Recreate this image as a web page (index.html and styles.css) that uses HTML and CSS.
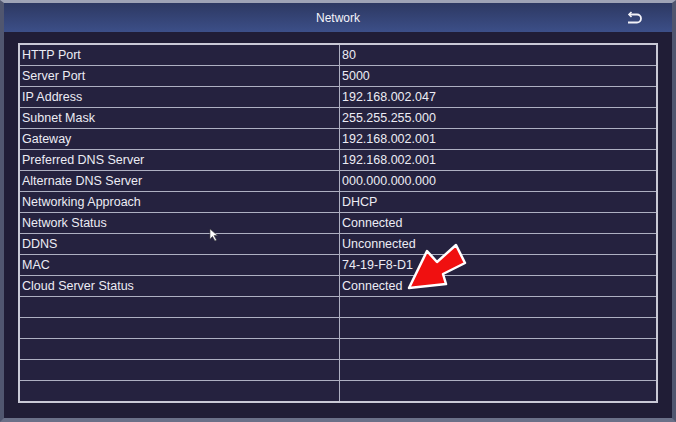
FILE: index.html
```html
<!DOCTYPE html>
<html lang="en">
<head>
    <meta charset="UTF-8">
    <title>Network</title>
    <link rel="stylesheet" href="styles.css">
</head>
<body>
    <div class="window">
        <div class="titlebar">
            <span class="title">Network</span>
            <svg class="back" width="18" height="14" viewBox="0 0 18 14">
                <path d="M3 3.5 H11 A4 4 0 0 1 11 11.5 H2" fill="none" stroke="#f2f2f8" stroke-width="1.8"/>
                <path d="M5.5 1 L3 3.5 L5.5 6" fill="none" stroke="#f2f2f8" stroke-width="1.6"/>
            </svg>
        </div>
        <div class="content">
            <table class="info">
                <tr><td>HTTP Port</td><td>80</td></tr>
                <tr><td>Server Port</td><td>5000</td></tr>
                <tr><td>IP Address</td><td>192.168.002.047</td></tr>
                <tr><td>Subnet Mask</td><td>255.255.255.000</td></tr>
                <tr><td>Gateway</td><td>192.168.002.001</td></tr>
                <tr><td>Preferred DNS Server</td><td>192.168.002.001</td></tr>
                <tr><td>Alternate DNS Server</td><td>000.000.000.000</td></tr>
                <tr><td>Networking Approach</td><td>DHCP</td></tr>
                <tr><td>Network Status</td><td>Connected</td></tr>
                <tr><td>DDNS</td><td>Unconnected</td></tr>
                <tr><td>MAC</td><td>74-19-F8-D1</td></tr>
                <tr><td>Cloud Server Status</td><td>Connected</td></tr>
                <tr><td></td><td></td></tr>
                <tr><td></td><td></td></tr>
                <tr><td></td><td></td></tr>
                <tr><td></td><td></td></tr>
                <tr><td></td><td></td></tr>
            </table>
        </div>
        <!-- annotation arrow over the table -->
        <svg class="pointer" width="72" height="56" viewBox="0 0 72 56">
            <path d="M9 48 L27 11 L37 22 L56 5 L65 23 L43 34 L46 44 Z" fill="#f01010" stroke="#ffffff" stroke-width="2.5" stroke-linejoin="round"/>
        </svg>
        <svg class="cursor" width="10" height="14" viewBox="0 0 10 14">
            <path d="M1 1 L1 11 L3.5 8.5 L6 13 L7.5 12 L5 7.5 L8.5 7.5 Z" fill="#ffffff" stroke="#444" stroke-width="0.6"/>
        </svg>
    </div>
</body>
</html>
```

FILE: styles.css
```css
body {
    margin: 0;
    background: #2a2c40;
    font-family: "Liberation Sans", Arial, sans-serif;
}
.window {
    position: relative;
    width: 668px;
    height: 415px;
    border-top: 3px solid #9ea3b6;
    border-left: 4px solid #50566f;
    border-right: 4px solid #50566f;
    border-bottom: 4px solid #6a7088;
    background: #201d36;
    overflow: hidden;
}
.titlebar {
    height: 29px;
    display: flex;
    align-items: center;
    justify-content: center;
    position: relative;
    background: linear-gradient(#2d3862, #3c4f88);
}
.title {
    color: #f4f4fa;
    font-size: 12px;
    padding-top: 1px;
}
.back {
    position: absolute;
    right: 28px;
    top: 8px;
}
.content {
    padding: 11px 0 0 14px;
}
.info {
    width: 640px;
    border-collapse: collapse;
    border: 2px solid #c9c9d6;
    background: #25223f;
}
.info td {
    height: 20px;
    padding: 0 0 0 2px;
    border: 1px solid #aeb0c2;
    color: #ececf4;
    font-size: 12.5px;
    line-height: 20px;
    white-space: nowrap;
}
.info td:first-child {
    width: 317px;
}
.pointer {
    position: absolute;
    left: 396px;
    top: 237px;
}
.cursor {
    position: absolute;
    left: 205px;
    top: 225px;
}
```
